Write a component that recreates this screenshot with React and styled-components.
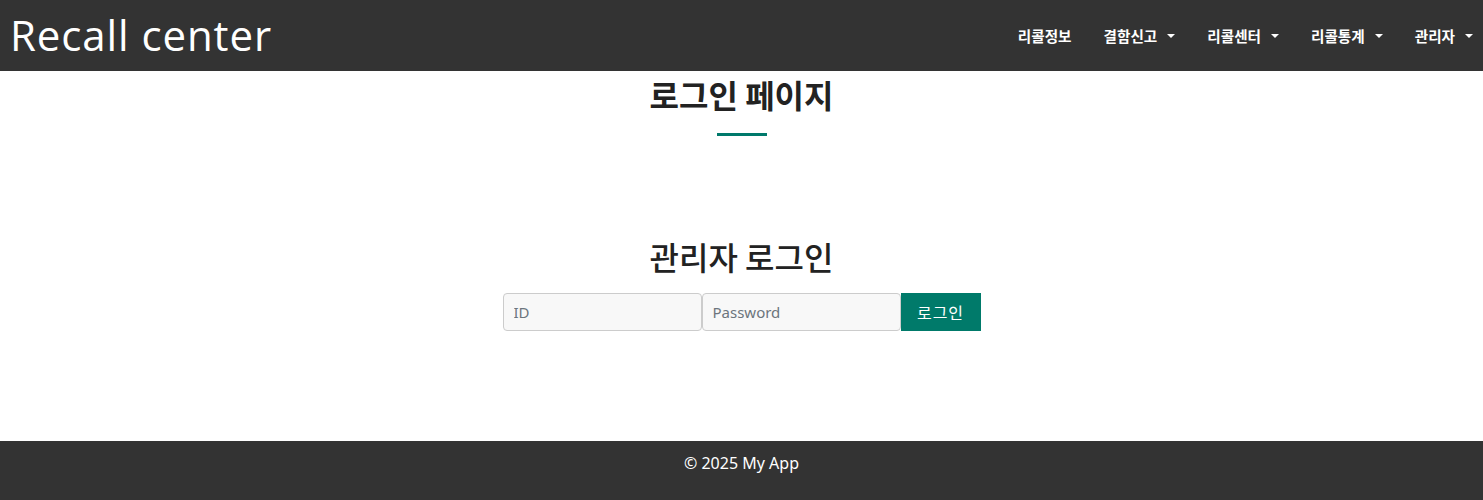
import React from 'react';
import styled, { createGlobalStyle } from 'styled-components';

const GlobalStyle = createGlobalStyle`
    body {
        margin: 0;
        font-family: "Noto Sans", "Noto Sans CJK KR", sans-serif;
        color: #212529;
        background: #ffffff;
    }
`;

const Caret = () => (
    <CaretIcon viewBox="0 0 8 4" aria-hidden="true">
        <path d="M0 0h8L4 4z" fill="currentColor" />
    </CaretIcon>
);

const App = () => {
    const menus = [
        { label: "리콜정보", dropdown: false },
        { label: "결함신고", dropdown: true },
        { label: "리콜센터", dropdown: true },
        { label: "리콜통계", dropdown: true },
        { label: "관리자", dropdown: true },
    ];

    return (
        <Wrapper>
            <GlobalStyle />
            <Navbar>
                <Brand>Recall center</Brand>
                <NavList>
                    {menus.map((menu) => (
                        <NavItem key={menu.label}>
                            {menu.label}
                            {menu.dropdown && <Caret />}
                        </NavItem>
                    ))}
                </NavList>
            </Navbar>

            <Main>
                <PageTitle>로그인 페이지</PageTitle>
                <Underline />

                <LoginSection>
                    <SectionTitle>관리자 로그인</SectionTitle>
                    <LoginForm onSubmit={(e) => e.preventDefault()}>
                        <Input type="text" placeholder="ID" />
                        <Input type="password" placeholder="Password" />
                        <SubmitButton type="submit">로그인</SubmitButton>
                    </LoginForm>
                </LoginSection>
            </Main>

            <Footer>© 2025 My App</Footer>
        </Wrapper>
    );
};

export default App;

const Wrapper = styled.div`
    width: 100%;
    min-height: 500px;
    display: flex;
    flex-direction: column;
`;

const Navbar = styled.nav`
    height: 71px;
    background: #333333;
    display: flex;
    align-items: center;
    justify-content: space-between;
    padding: 0 10px;
    box-sizing: border-box;
`;

const Brand = styled.a`
    font-family: "Open Sans", "Noto Sans", sans-serif;
    font-size: 42px;
    font-weight: 400;
    color: #ffffff;
    letter-spacing: 0.9px;
    line-height: 1;
    margin-top: -2px;
    cursor: pointer;
`;

const NavList = styled.ul`
    display: flex;
    align-items: center;
    list-style: none;
    margin: 0;
    padding: 0;
`;

const NavItem = styled.li`
    display: flex;
    align-items: center;
    padding: 0 16px;
    font-family: "Noto Sans CJK KR", sans-serif;
    font-size: 14.6px;
    font-weight: 700;
    color: #ffffff;
    cursor: pointer;

    &:last-child {
        padding-right: 0;
    }
`;

const CaretIcon = styled.svg`
    width: 8px;
    height: 4px;
    margin-left: 10px;
    margin-top: 1px;
`;

const Main = styled.main`
    flex: 1;
    height: 370px;
    display: flex;
    flex-direction: column;
    align-items: center;
`;

const PageTitle = styled.h2`
    margin: 4px 0 0;
    font-family: "Noto Sans CJK KR", sans-serif;
    font-size: 32px;
    font-weight: 700;
    line-height: 1.2;
    color: #222222;
`;

const Underline = styled.div`
    width: 50px;
    height: 3px;
    background: #00796b;
    margin-top: 20px;
`;

const LoginSection = styled.section`
    margin-top: 101px;
    display: flex;
    flex-direction: column;
    align-items: center;
`;

const SectionTitle = styled.h3`
    margin: 0 0 17px;
    font-family: "Noto Sans CJK KR", sans-serif;
    font-size: 32px;
    font-weight: 500;
    line-height: 1.2;
    color: #222222;
`;

const LoginForm = styled.form`
    display: flex;
    align-items: stretch;
    height: 38px;
`;

const Input = styled.input`
    width: 199px;
    box-sizing: border-box;
    padding: 0 10px;
    border: 1px solid #cccccc;
    border-radius: 4px;
    background: #f8f8f8;
    font-family: "Noto Sans", sans-serif;
    font-size: 15px;
    color: #333333;
    outline: none;

    &::placeholder {
        color: #6c757d;
    }
`;

const SubmitButton = styled.button`
    width: 80px;
    border: none;
    background: #007a6a;
    color: #ffffff;
    font-family: "Noto Sans CJK KR", sans-serif;
    font-size: 16px;
    letter-spacing: 1px;
    cursor: pointer;
`;

const Footer = styled.footer`
    height: 59px;
    background: #333333;
    color: #ffffff;
    display: flex;
    justify-content: center;
    padding-top: 11px;
    box-sizing: border-box;
    font-family: "Noto Sans", sans-serif;
    font-size: 16px;
`;
